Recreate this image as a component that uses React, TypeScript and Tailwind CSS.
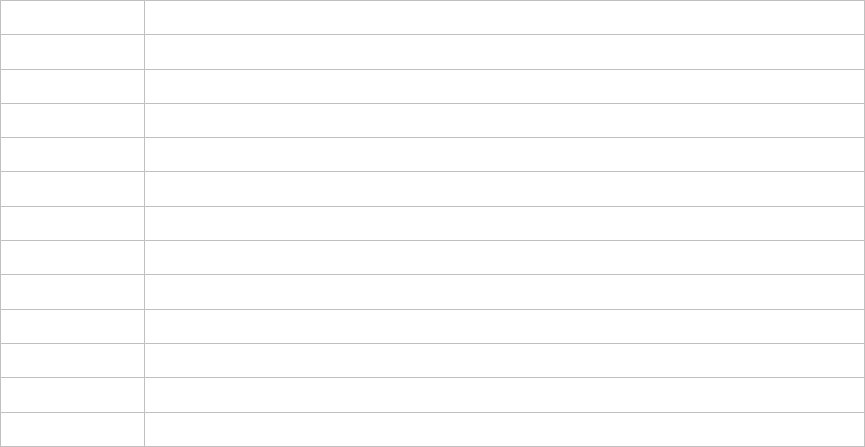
const rows = Array.from({ length: 13 }, (_, i) => i);

export default function App() {
  return (
    <div className="w-full h-[447px] bg-white" style={{ fontFamily: '"Liberation Sans", Arial, sans-serif' }}>
      <table className="w-full h-full border-collapse table-fixed">
        <colgroup>
          <col className="w-[144px]" />
          <col />
        </colgroup>
        <tbody>
          {rows.map((r) => (
            <tr key={r}>
              <td className="border border-[#c0c0c0] p-0"></td>
              <td className="border border-[#c0c0c0] p-0"></td>
            </tr>
          ))}
        </tbody>
      </table>
    </div>
  );
}
